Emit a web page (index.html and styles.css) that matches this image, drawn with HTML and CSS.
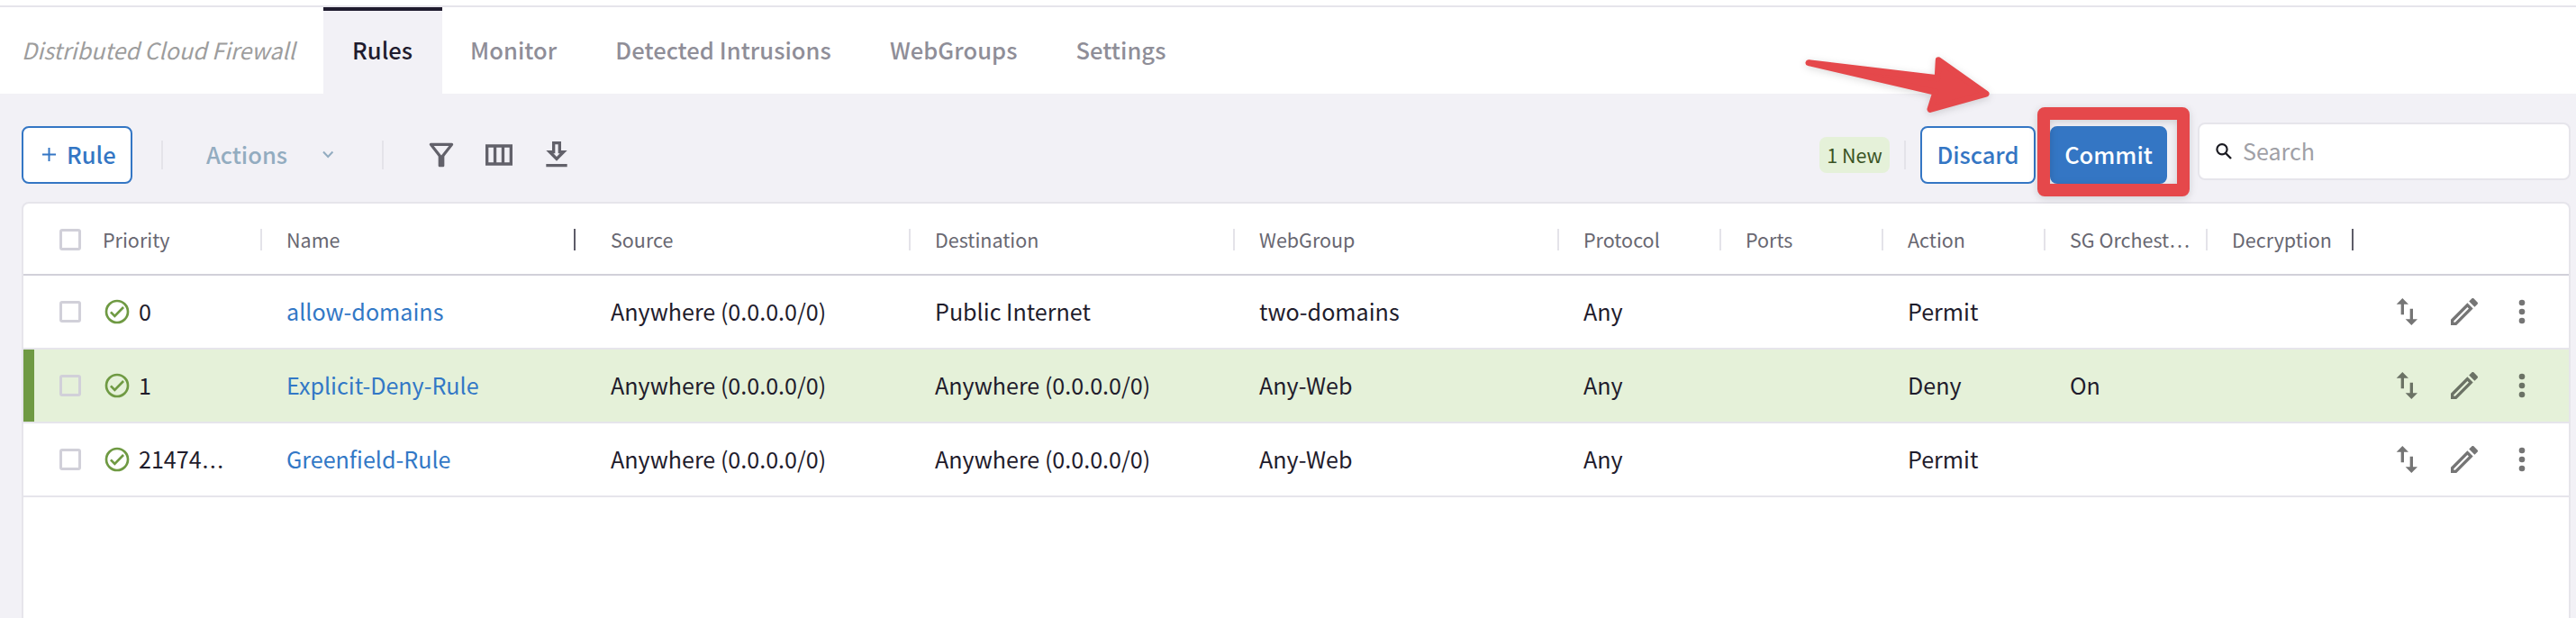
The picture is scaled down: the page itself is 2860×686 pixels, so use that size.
FILE: index.html
```html
<!DOCTYPE html>
<html lang="en">
<head>
<meta charset="utf-8">
<title>Distributed Cloud Firewall</title>
<link rel="stylesheet" href="styles.css">
</head>
<body>
<svg class="sprite" aria-hidden="true">
  <symbol id="ok" viewBox="0 0 24 24"><path d="M16.59 7.58 10 14.17l-2.590-2.580L6 13l4 4 8-8zM12 2a10 10 0 1 0 0 20 10 10 0 0 0 0-20m0 18a8 8 0 1 1 0-16 8 8 0 0 1 0 16"/></symbol>
  <symbol id="move" viewBox="3.4 2.4 19.2 19.2"><path d="M16 17.010V10h-2v7.010h-3L15 21l4-3.990zM9 3 5 6.990h3V14h2V6.990h3z"/></symbol>
  <symbol id="edit" viewBox="2.4 2.4 19.2 19.2"><path d="m14.060 9.020.92.92L5.920 19H5v-.92zM17.660 3c-.25 0-.51.1-.7.29l-1.830 1.830 3.750 3.750 1.830-1.830c.39-.39.39-1.020 0-1.410l-2.340-2.340c-.2-.2-.45-.29-.71-.29m-3.600 3.190L3 17.250V21h3.750L17.810 9.940z"/></symbol>
  <symbol id="more" viewBox="0 0 8 28"><circle cx="4" cy="4" r="3.300"/><circle cx="4" cy="14" r="3.300"/><circle cx="4" cy="24" r="3.300"/></symbol>
</svg>
<header class="tabs">
  <span class="title">Distributed Cloud Firewall</span>
  <a class="tab active"><span>Rules</span></a>
  <a class="tab"><span>Monitor</span></a>
  <a class="tab"><span>Detected Intrusions</span></a>
  <a class="tab"><span>WebGroups</span></a>
  <a class="tab"><span>Settings</span></a>
</header>
<main class="page">
  <div class="toolbar">
    <button class="btn add"><svg width="15" height="16" viewBox="0 0 15 16"><path d="M7.500 1v15M0 8.500h15" stroke="currentColor" stroke-width="2"/></svg>Rule</button>
    <i class="sep"></i>
    <span class="actions">Actions<svg width="14" height="9" viewBox="0 0 14 9"><path d="M2 1.500 7.200 7l5.200-5.500" fill="none" stroke="currentColor" stroke-width="2"/></svg></span>
    <i class="sep next"></i>
    <div class="tools">
      <svg viewBox="0 0 24 24"><path d="M7 6h10l-5.010 6.300zm-2.750-.39C6.270 8.200 10 13 10 13v6c0 .55.45 1 1 1h2c.55 0 1-.45 1-1v-6s3.720-4.800 5.740-7.390c.51-.66.04-1.610-.79-1.610H5.040c-.83 0-1.300.95-.79 1.610"/></svg>
      <svg viewBox="0 0 24 24"><path d="M3 5v14h18V5zm5.330 12H5V7h3.330zm5.340 0h-3.340V7h3.340zM19 17h-3.330V7H19z"/></svg>
      <svg viewBox="0 0 24 24"><path d="M13 5v6h1.170L12 13.170 9.830 11H11V5zm2-2H9v6H5l7 7 7-7h-4zm4 15H5v2h14z"/></svg>
    </div>
    <span class="badge">1 New</span>
    <i class="sep right"></i>
    <button class="btn discard">Discard</button>
    <button class="btn commit">Commit</button>
    <label class="search"><svg width="18" height="18" viewBox="0 0 18 18"><circle cx="7" cy="6.800" r="5.600" fill="none" stroke="currentColor" stroke-width="2.200"/><path d="m11 11 6 6" stroke="currentColor" stroke-width="2.400"/></svg><span class="hint">Search</span></label>
  </div>
  <section class="grid">
    <div class="row head">
      <i class="box"></i><span>Priority<i class="bar"></i></span><span>Name<i class="bar dark"></i></span><span>Source<i class="bar"></i></span><span>Destination<i class="bar"></i></span><span>WebGroup<i class="bar"></i></span><span>Protocol<i class="bar"></i></span><span>Ports<i class="bar"></i></span><span>Action<i class="bar"></i></span><span>SG Orchest…<i class="bar"></i></span><span>Decryption<i class="bar dark last"></i></span><span></span>
    </div>
    <div class="row">
      <i class="box"></i><div class="prio"><svg class="ok"><use href="#ok"/></svg><span>0</span></div><a>allow-domains</a><span>Anywhere (0.0.0.0/0)</span><span>Public Internet</span><span>two-domains</span><span>Any</span><span></span><span>Permit</span><span></span><span></span>
      <div class="ops"><svg class="move"><use href="#move"/></svg><svg class="edit"><use href="#edit"/></svg><svg class="more"><use href="#more"/></svg></div>
    </div>
    <div class="row new">
      <i class="box"></i><div class="prio"><svg class="ok"><use href="#ok"/></svg><span>1</span></div><a>Explicit-Deny-Rule</a><span>Anywhere (0.0.0.0/0)</span><span>Anywhere (0.0.0.0/0)</span><span>Any-Web</span><span>Any</span><span></span><span>Deny</span><span>On</span><span></span>
      <div class="ops"><svg class="move"><use href="#move"/></svg><svg class="edit"><use href="#edit"/></svg><svg class="more"><use href="#more"/></svg></div>
    </div>
    <div class="row">
      <i class="box"></i><div class="prio"><svg class="ok"><use href="#ok"/></svg><span>21474<b class="dots">…</b></span></div><a>Greenfield-Rule</a><span>Anywhere (0.0.0.0/0)</span><span>Anywhere (0.0.0.0/0)</span><span>Any-Web</span><span>Any</span><span></span><span>Permit</span><span></span><span></span>
      <div class="ops"><svg class="move"><use href="#move"/></svg><svg class="edit"><use href="#edit"/></svg><svg class="more"><use href="#more"/></svg></div>
    </div>
  </section>
</main>
<div class="callout"></div>
<svg class="arrow" width="220" height="80" viewBox="0 0 220 80"><path d="M8 9.700 151.200 26.800 152.300 6.800 205 44.200 143 61.300 149 42.300z" fill="#e5484b" stroke="#e5484b" stroke-width="7" stroke-linejoin="round"/></svg>
</body>
</html>
```
FILE: styles.css
```css
* { box-sizing: border-box; }
body { margin: 0; width: 2860px; height: 686px; overflow: hidden; position: relative; background: #fff; color: #1f1c2c; font: 25.1px/36px "Noto Sans CJK SC", "Noto Sans", sans-serif; }
.sprite { display: none; }
svg { flex: none; }
.tabs { display: flex; margin-top: 6px; height: 98px; border-top: 2px solid #e6e5eb; font-weight: 500; font-size: 25.5px; letter-spacing: .06px; color: #8f8e98; }
.title { width: 359px; padding: 29px 0 0 24px; font-size: 25.1px; letter-spacing: 0; font-weight: 400; font-style: italic; color: #9d9d9d; white-space: nowrap; }
.tab { padding: 29px 32px 0 33px; white-space: nowrap; }
.tab.active { width: 132px; background: #f2f1f6; color: #1f1b2e; border-top: 4px solid #1f1b2e; padding: 25px 0 0 32px; }
.tab.active + .tab { padding-left: 31px; }
.page { background: #f2f1f6; height: 582px; padding: 36px 6px 0 24px; }
.toolbar { display: flex; align-items: center; height: 64px; }
.btn { font: inherit; font-size: 25.5px; font-weight: 500; height: 64px; border: 2px solid #3476c4; border-radius: 8px; background: #fff; color: #3476c4; padding: 0 0 2px; flex: none; }
.add { width: 123px; display: flex; align-items: center; padding-left: 21px; gap: 12px; }
.sep { width: 2px; height: 32px; background: #e4e3e9; margin-left: 32px; flex: none; }
.sep.next { margin-left: 0; }
.actions { width: 243px; padding: 0 53px 2px 48px; color: #93acc0; font-size: 25.5px; font-weight: 500; display: flex; align-items: center; justify-content: space-between; }
.tools { display: flex; align-items: center; margin-left: 44px; gap: 24px; }
.tools svg { width: 40px; height: 40px; fill: #62616a; }
.badge { margin-left: auto; width: 78px; height: 40px; border-radius: 8px; background: #e5f1d9; color: #3a5324; font-size: 21.5px; line-height: 40px; text-align: center; }
.sep.right { margin-left: 16px; }
.discard { width: 128px; margin-left: 16px; }
.commit { width: 130px; margin-left: 16px; background: #3476c4; color: #fff; }
.search { width: 414px; height: 64px; margin: -8px 0 0 34px; border: 2px solid #e6e5eb; border-radius: 8px; background: #fff; color: #1b1b22; padding-left: 18px; display: flex; align-items: center; gap: 12px; }
.hint { color: #a0a0a6; padding-bottom: 2px; }
.grid { margin-top: 20px; height: 480px; border: 2px solid #e6e5eb; border-bottom: 0; border-radius: 8px 8px 0 0; background: #fff; }
.row { display: grid; grid-template-columns: 66px 204px 360px 360px 360px 360px 180px 180px 180px 180px 180px 1fr; align-items: center; height: 82px; padding-left: 22px; border-bottom: 2px solid #e6e5eb; white-space: nowrap; }
.row a, .row span { padding-bottom: 2px; }
.row a { color: #3278c6; }
.row.head { height: 80px; border-color: #d1d0d9; font-size: 21.5px; color: #686771; padding-top: 1px; }
.head span { display: flex; align-items: center; justify-content: space-between; }
.row.head span { padding-bottom: 0; }
.bar { width: 2px; height: 24px; background: #e4e3e9; margin-right: 27px; }
.bar.dark { background: #5d5c68; margin-right: 39px; }
.bar.last { margin-right: 45px; }
.box { width: 24px; height: 24px; margin-left: 18px; border: 3px solid #d1d0d9; border-radius: 3px; }
.prio { display: flex; align-items: center; gap: 8px; }
.dots { font-weight: 400; line-height: 0; vertical-align: -8px; }
.ok { width: 32px; height: 32px; fill: #6f9a43; }
.new { background: #e5f1d9; box-shadow: inset 12px 0 #6f9a43; }
.ops { display: flex; align-items: center; fill: #757575; }
.new .ops { fill: #6b7265; }
.move { width: 32px; height: 32px; }
.edit { width: 32px; height: 32px; margin-left: 30px; }
.more { width: 8px; height: 28px; margin-left: 44px; }
.callout { position: absolute; left: 2262px; top: 119px; width: 169px; height: 99px; border: 14px solid #e5484b; border-radius: 8px; filter: drop-shadow(0 2px 4px rgba(0,0,0,.15)); }
.arrow { position: absolute; left: 2000px; top: 60px; filter: drop-shadow(0 2px 4px rgba(0,0,0,.15)); }
```
